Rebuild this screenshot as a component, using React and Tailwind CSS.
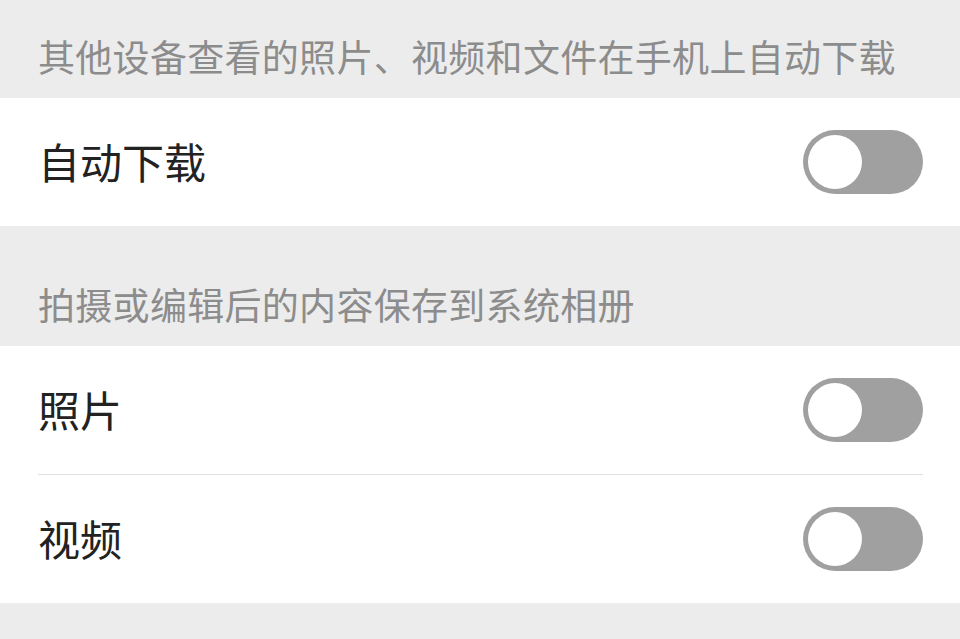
export default function App() {
  const Toggle = () => (
    <div className="w-[120px] h-[64px] rounded-full bg-[#a0a0a0] p-[5px] flex items-center shrink-0">
      <div className="w-[54px] h-[54px] rounded-full bg-white" />
    </div>
  );
  const Row = ({ label }) => (
    <div className="h-[128px] flex items-center justify-between">
      <span className="text-[42px] leading-none text-[#222] pb-[3px]">{label}</span>
      <Toggle />
    </div>
  );
  return (
    <div
      className="w-[960px] h-[639px] bg-[#ececec] overflow-hidden flex flex-col"
      style={{ fontFamily: '"Noto Sans CJK SC", "Noto Sans", sans-serif' }}
    >
      <div className="h-[98px] pl-[38px] flex items-center pt-[14px] text-[37px] tracking-[0.3px] leading-none text-[#8c8c8c]">
        其他设备查看的照片、视频和文件在手机上自动下载
      </div>
      <div className="bg-white pl-[38px] pr-[37px]">
        <Row label="自动下载" />
      </div>
      <div className="h-[120px] pl-[38px] flex items-center pt-[37px] text-[37px] tracking-[0.3px] leading-none text-[#8c8c8c]">
        拍摄或编辑后的内容保存到系统相册
      </div>
      <div className="bg-white pl-[38px] pr-[37px]">
        <Row label="照片" />
        <div className="h-px bg-[#e0e0e0]" />
        <Row label="视频" />
      </div>
    </div>
  );
}
